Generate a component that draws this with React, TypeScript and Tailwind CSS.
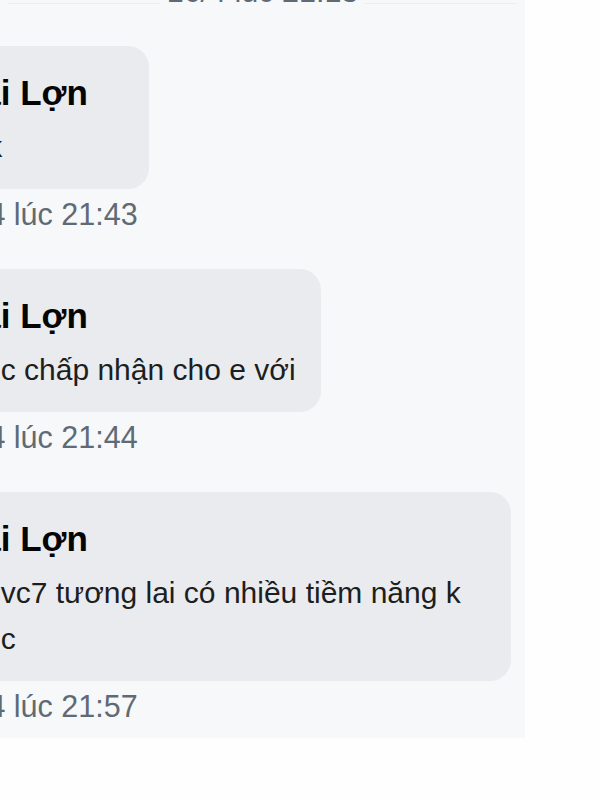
import React from "react";

function Bubble({ name, lines, time, kind }: { name: string; lines: string[]; time: string; kind: number }) {
  const box = kind === 0 ? "min-w-[206px]" : kind === 2 ? "w-[568px]" : "";
  return (
    <div className="flex flex-col items-start">
      <div className={`rounded-[21px] bg-[#e9ebee] pl-[16px] pr-[25px] pt-[27px] pb-[19px] ${box}`}>
        <div className="-ml-[3px] whitespace-nowrap text-[35px] font-bold leading-[40px] text-[#050505]">{name}</div>
        <div className="mt-[11px] whitespace-nowrap text-[30px] leading-[46px] text-[#1c1e21]">
          {lines.map((l, i) => (
            <div key={i}>{l}</div>
          ))}
        </div>
      </div>
      <div className="ml-[3px] mt-[7px] mb-[37px] whitespace-nowrap text-[30.5px] leading-[36px] text-[#606a75]">
        {time}
      </div>
    </div>
  );
}

export default function App() {
  const msgs = [
    { name: "Hai Lợn", lines: ["E k"], time: "16/4 lúc 21:43" },
    { name: "Hai Lợn", lines: ["e dc chấp nhận cho e với"], time: "16/4 lúc 21:44" },
    {
      name: "Hai Lợn",
      lines: ["ae vc7 tương lai có nhiều tiềm năng k", "e dc"],
      time: "16/4 lúc 21:57",
    },
  ];
  return (
    <div className="min-h-[800px] w-[600px] bg-[#fefefe] font-['Liberation_Sans',Arial,sans-serif]">
      <div className="h-[738px] w-[525px] overflow-hidden bg-[#f7f8f9]">
        <div className="-mt-[27px] mb-[37px] flex items-start">
          <div className="ml-[8px] mt-[30px] h-px flex-1 bg-[#eceef0]" />
          <span className="px-[6px] whitespace-nowrap text-[30.5px] leading-[36px] text-[#606a75]">16/4 lúc 21:13</span>
          <div className="mr-[8px] mt-[30px] h-px flex-1 bg-[#eceef0]" />
        </div>
        <div className="-ml-[57px] flex flex-col items-start">
          {msgs.map((m, i) => (
            <Bubble key={i} name={m.name} lines={m.lines} time={m.time} kind={i} />
          ))}
        </div>
      </div>
    </div>
  );
}
